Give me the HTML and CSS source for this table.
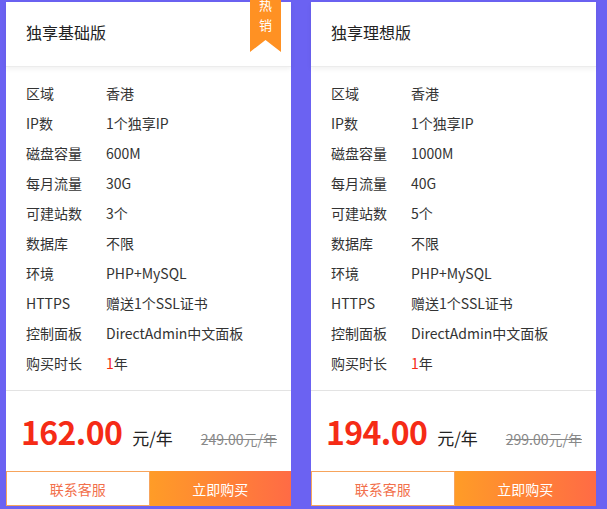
FILE: index.html
```html
<!DOCTYPE html>
<html lang="zh-CN">
<head>
    <meta charset="UTF-8">
    <meta name="viewport" content="width=device-width, initial-scale=1.0">
    <title>独享主机</title>
    <link rel="stylesheet" href="styles.css">
</head>
<body>
    <div class="plans">
        <div class="plan">
            <div class="plan-head">
                <h3>独享基础版</h3>
                <span class="ribbon">热<br>销</span>
            </div>
            <ul class="specs">
                <li><span class="label">区域</span><span>香港</span></li>
                <li><span class="label">IP数</span><span>1个独享IP</span></li>
                <li><span class="label">磁盘容量</span><span>600M</span></li>
                <li><span class="label">每月流量</span><span>30G</span></li>
                <li><span class="label">可建站数</span><span>3个</span></li>
                <li><span class="label">数据库</span><span>不限</span></li>
                <li><span class="label">环境</span><span>PHP+MySQL</span></li>
                <li><span class="label">HTTPS</span><span>赠送1个SSL证书</span></li>
                <li><span class="label">控制面板</span><span>DirectAdmin中文面板</span></li>
                <li><span class="label">购买时长</span><span><em>1</em>年</span></li>
            </ul>
            <div class="price">
                <strong>162.00</strong>
                <span class="unit">元/年</span>
                <del>249.00元/年</del>
            </div>
            <div class="actions">
                <a href="#" class="btn-contact">联系客服</a>
                <a href="#" class="btn-buy">立即购买</a>
            </div>
        </div>

        <div class="plan">
            <div class="plan-head">
                <h3>独享理想版</h3>
            </div>
            <ul class="specs">
                <li><span class="label">区域</span><span>香港</span></li>
                <li><span class="label">IP数</span><span>1个独享IP</span></li>
                <li><span class="label">磁盘容量</span><span>1000M</span></li>
                <li><span class="label">每月流量</span><span>40G</span></li>
                <li><span class="label">可建站数</span><span>5个</span></li>
                <li><span class="label">数据库</span><span>不限</span></li>
                <li><span class="label">环境</span><span>PHP+MySQL</span></li>
                <li><span class="label">HTTPS</span><span>赠送1个SSL证书</span></li>
                <li><span class="label">控制面板</span><span>DirectAdmin中文面板</span></li>
                <li><span class="label">购买时长</span><span><em>1</em>年</span></li>
            </ul>
            <div class="price">
                <strong>194.00</strong>
                <span class="unit">元/年</span>
                <del>299.00元/年</del>
            </div>
            <div class="actions">
                <a href="#" class="btn-contact">联系客服</a>
                <a href="#" class="btn-buy">立即购买</a>
            </div>
        </div>
    </div>
</body>
</html>
```

FILE: styles.css
```css
body {
    font-family: "Noto Sans CJK SC", "Liberation Sans", sans-serif;
    margin: 0;
    padding: 0;
    background-color: #6b62f2;
    color: #333;
}
.plans {
    display: flex;
    gap: 20px;
    padding: 2px 10px 0 6px;
}
.plan {
    position: relative;
    width: 285px;
    background-color: white;
}
.plan-head {
    height: 64px;
    display: flex;
    align-items: center;
    padding: 0 20px 5px;
    box-sizing: border-box;
    height: 65px;
    border-bottom: 1px solid #ececec;
    box-shadow: 0 2px 5px rgba(0, 0, 0, 0.06);
}
.plan-head h3 {
    margin: 0;
    font-size: 16px;
    font-weight: normal;
    color: #222;
}
.ribbon {
    position: absolute;
    top: -12px;
    left: 244px;
    width: 31px;
    height: 62px;
    padding-top: 5px;
    box-sizing: border-box;
    background-color: #ff9123;
    color: white;
    font-size: 13px;
    line-height: 20px;
    text-align: center;
    clip-path: polygon(0 0, 100% 0, 100% 100%, 50% calc(100% - 12px), 0 100%);
}
.specs {
    list-style: none;
    margin: 0;
    padding: 11px 20px 12px;
    border-bottom: 1px solid #e3e3e3;
}
.specs li {
    display: flex;
    height: 30px;
    align-items: center;
    font-size: 14px;
}
.specs .label {
    width: 80px;
}
.specs em {
    font-style: normal;
    color: #f52b16;
}
.price {
    display: flex;
    align-items: baseline;
    height: 80px;
    padding: 24px 14px 0 15px;
    box-sizing: border-box;
    line-height: 1;
}
.price strong {
    font-size: 32px;
    font-weight: bold;
    letter-spacing: -0.6px;
    color: #f52b16;
}
.price .unit {
    margin-left: 10px;
    font-size: 17px;
    color: #222;
}
.price del {
    margin-left: auto;
    font-size: 14px;
    color: #888;
}
.actions {
    display: flex;
    height: 35px;
}
.actions a {
    flex: 1;
    display: flex;
    align-items: center;
    justify-content: center;
    font-size: 14px;
    text-decoration: none;
}
.btn-contact {
    border: 1px solid #f7a45c;
    color: #f26f4b;
    box-sizing: border-box;
}
.btn-buy {
    color: white;
    background: linear-gradient(to right, #ff9c27, #ff6b45);
}
```
